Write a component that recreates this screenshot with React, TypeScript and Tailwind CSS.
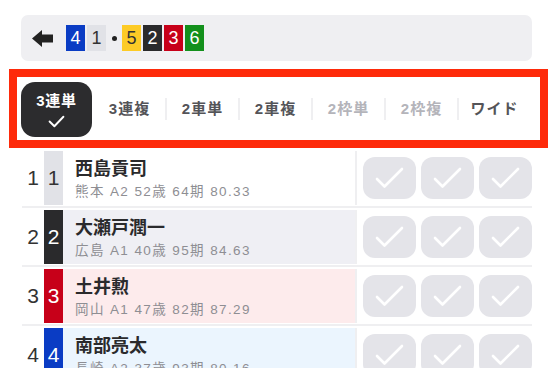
import React from "react";

const FONT = '"Liberation Sans", "Noto Sans CJK JP", Arial, sans-serif';

const topBoxes: { n: string; cls: string }[] = [
  { n: "4", cls: "bg-[#0a3cc4] text-white" },
  { n: "1", cls: "bg-[#e1e2e7] text-[#333]" },
];
const topBoxes2: { n: string; cls: string }[] = [
  { n: "5", cls: "bg-[#fdcb26] text-[#333]" },
  { n: "2", cls: "bg-[#2a2a2c] text-white" },
  { n: "3", cls: "bg-[#c70019] text-white" },
  { n: "6", cls: "bg-[#13901c] text-white" },
];

const tabs: { label: string; disabled?: boolean }[] = [
  { label: "3連複" },
  { label: "2車単" },
  { label: "2車複" },
  { label: "2枠単", disabled: true },
  { label: "2枠複", disabled: true },
  { label: "ワイド" },
];

const rows = [
  { n: "1", box: "bg-[#e1e2e7] text-[#333]", bg: "bg-white", name: "西島貢司", info: "熊本 A2 52歳 64期 80.33" },
  { n: "2", box: "bg-[#2a2a2c] text-white", bg: "bg-[#efeff4]", name: "大瀬戸潤一", info: "広島 A1 40歳 95期 84.63" },
  { n: "3", box: "bg-[#c70019] text-white", bg: "bg-[#fdebec]", name: "土井勲", info: "岡山 A1 47歳 82期 87.29" },
  { n: "4", box: "bg-[#0a3cc4] text-white", bg: "bg-[#ebf5fe]", name: "南部亮太", info: "長崎 A2 37歳 93期 80.16" },
];

function Check({ className }: { className?: string }) {
  return (
    <svg viewBox="0 0 53 42" className={className} fill="none">
      <polyline points="14,22 21.5,29.5 39,12" stroke="white" strokeWidth="2.6" strokeLinecap="round" strokeLinejoin="round" />
    </svg>
  );
}

export default function App() {
  return (
    <div className="w-[554px] h-[368px] overflow-hidden bg-white pt-[15px]" style={{ fontFamily: FONT }}>
      {/* top bar */}
      <div className="ml-[21px] w-[511px] h-[46px] rounded-[7px] bg-[#efeff2] flex items-center pl-[11px]">
        <svg viewBox="0 0 21 17" className="w-[21px] h-[17px] mr-[13px]">
          <path d="M0 8.5 L10 0 L10 4.5 L21 4.5 L21 12.5 L10 12.5 L10 17 Z" fill="#222" />
        </svg>
        <div className="flex gap-[2px]">
          {topBoxes.map((b) => (
            <div key={b.n} className={`w-[19px] h-[26px] flex items-center justify-center text-[18px] ${b.cls}`}>
              {b.n}
            </div>
          ))}
        </div>
        <div className="w-[16px] flex justify-center">
          <div className="w-[5px] h-[5px] rounded-full bg-[#222]" />
        </div>
        <div className="flex gap-[2px]">
          {topBoxes2.map((b) => (
            <div key={b.n} className={`w-[19px] h-[26px] flex items-center justify-center text-[18px] ${b.cls}`}>
              {b.n}
            </div>
          ))}
        </div>
      </div>

      {/* tabs */}
      <div className="mt-[8px] ml-[9px] w-[539px] h-[79px] border-[8px] border-[#fe2a0a] bg-white pl-[3px] pt-[5px]">
        <div className="flex">
          <div className="w-[73px] px-[1px]">
            <div className="h-[55px] rounded-[14px] bg-[#2c2c2e] flex flex-col items-center pt-[9px]">
              <span className="text-[15px] font-semibold text-white leading-[19px] tracking-[0.8px]">3連単</span>
              <svg viewBox="0 0 16 12" className="w-[17px] h-[13px] mt-[5px]" fill="none">
                <polyline points="1.5,6 6,10.5 14.5,1.5" stroke="white" strokeWidth="1.8" strokeLinecap="round" strokeLinejoin="round" />
              </svg>
            </div>
          </div>
          {tabs.map((t, i) => (
            <div key={t.label} className="w-[73px] h-[55px] relative flex items-center justify-center">
              {i > 0 && <div className="absolute left-[-1px] top-[16px] w-[2px] h-[22px] bg-[#efeff1]" />}
              <span className={`text-[15px] font-bold tracking-[1px] ${t.disabled ? "text-[#b4b4ba]" : "text-[#545458]"}`}>
                {t.label}
              </span>
            </div>
          ))}
        </div>
      </div>

      {/* rows */}
      <div className="mt-[1px]">
        {rows.map((r) => (
          <div key={r.n} className="ml-[22px] w-[510px] pt-[2px] pb-[1px] border-b-2 border-[#efeff1]">
            <div className="flex h-[54px]">
              <div className="w-[22px] flex items-center justify-center text-[21px] text-[#333]">{r.n}</div>
              <div className={`w-[19px] flex items-center justify-center text-[21px] ${r.box}`}>{r.n}</div>
              <div className={`w-[292px] flex flex-col justify-center pl-[12px] pt-[3px] ${r.bg}`}>
                <div className="text-[18px] font-bold text-[#2a2a2c] leading-[22px]">{r.name}</div>
                <div className="text-[13.5px] text-[#8e8e93] tracking-[1.4px] leading-[18px] mt-[3px]">{r.info}</div>
              </div>
              <div className="w-[2px] bg-[#efeff1]" />
              <div className="flex items-center gap-[5px] pl-[6px]">
                {[0, 1, 2].map((k) => (
                  <div key={k} className="w-[53px] h-[42px] rounded-[12px] bg-[#e4e4e9]">
                    <Check className="w-[53px] h-[42px]" />
                  </div>
                ))}
              </div>
            </div>
          </div>
        ))}
      </div>
    </div>
  );
}
